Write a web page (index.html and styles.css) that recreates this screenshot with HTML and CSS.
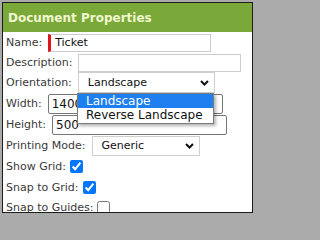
FILE: index.html
```html
<!DOCTYPE html>
<html>
<head>
<meta charset="utf-8">
<link rel="stylesheet" href="styles.css">
</head>
<body>
<div class="panel">
  <div class="header">Document Properties</div>
  <div class="row r-name">
    <span class="label">Name:</span>
    <input class="field field-name" type="text" value="Ticket">
  </div>
  <div class="row r-desc">
    <span class="label">Description:</span>
    <input class="field field-desc" type="text" value="">
  </div>
  <div class="row r-orient">
    <span class="label">Orientation:</span>
    <div class="select select-orient">
      <span class="select-text">Landscape</span>
      <svg class="chev" width="9" height="6" viewBox="0 0 9 6"><polyline points="1,1 4.5,4.5 8,1" fill="none" stroke="#111" stroke-width="2"/></svg>
    </div>
  </div>
  <div class="row r-num">
    <span class="label">Width:</span>
    <input class="num" type="text" value="1400">
  </div>
  <div class="row r-num">
    <span class="label">Height:</span>
    <input class="num" type="text" value="500">
  </div>
  <div class="row r-print">
    <span class="label">Printing Mode:</span>
    <div class="select select-print">
      <span class="select-text">Generic</span>
      <svg class="chev" width="9" height="6" viewBox="0 0 9 6"><polyline points="1,1 4.5,4.5 8,1" fill="none" stroke="#111" stroke-width="2"/></svg>
    </div>
  </div>
  <div class="row r-check">
    <span class="label">Show Grid:</span>
    <input class="check" type="checkbox" checked>
  </div>
  <div class="row r-check">
    <span class="label">Snap to Grid:</span>
    <input class="check" type="checkbox" checked>
  </div>
  <div class="row r-check r-last">
    <span class="label">Snap to Guides:</span>
    <input class="check" type="checkbox">
  </div>
  <div class="dropdown">
    <div class="opt opt-active">Landscape</div>
    <div class="opt">Reverse Landscape</div>
  </div>
</div>
</body>
</html>
```
FILE: styles.css
```css
html, body {
  margin: 0;
  padding: 0;
  background: #ababab;
  width: 256px;
  height: 216px;
  overflow: hidden;
}
body {
  font-family: "DejaVu Sans", Verdana, sans-serif;
  font-size: 11px;
}
.panel {
  position: relative;
  box-sizing: border-box;
  margin: 2px 3px 0 2px;
  width: 251px;
  height: 211px;
  border: 1px solid #1c1c1c;
  background: #fff;
  overflow: hidden;
  display: flex;
  flex-direction: column;
}
.header {
  flex: none;
  height: 29px;
  background: #7aa93a;
  color: #f1f7cf;
  font-weight: bold;
  font-size: 12px;
  display: flex;
  align-items: center;
  padding-left: 5px;
}
.row {
  flex: none;
  display: flex;
  align-items: center;
  padding-left: 3px;
  gap: 6px;
  height: 21px;
  color: #3a3a3a;
}
.r-desc { height: 19px; }
.r-check { gap: 4px; }
.r-last { height: 18px; }
.label { white-space: nowrap; }
.field {
  box-sizing: border-box;
  height: 18px;
  width: 163px;
  margin: 0;
  padding: 0 3px;
  border: 1px solid #cdcdcd;
  font: 11px "DejaVu Sans", Verdana, sans-serif;
  color: #111;
  outline: none;
}
.field-name {
  border-left: 3px solid #e0141e;
  padding-left: 4px;
}
.num {
  box-sizing: border-box;
  height: 20px;
  width: 175px;
  margin: 0;
  padding: 0 3px;
  border: 1px solid #767676;
  border-radius: 2px;
  font: 12px "DejaVu Sans", Verdana, sans-serif;
  color: #111;
  outline: none;
}
.select {
  box-sizing: border-box;
  display: flex;
  align-items: center;
  justify-content: space-between;
  border: 1px solid #cfcfcf;
  padding: 0 5px 0 9px;
  color: #111;
  background: #fff;
}
.select-orient { width: 137px; height: 21px; }
.select-print { width: 108px; height: 20px; }
.chev { display: block; }
.check {
  width: 13px;
  height: 13px;
  margin: 0;
}
.dropdown {
  position: absolute;
  left: 74px;
  top: 90px;
  width: 137px;
  box-sizing: border-box;
  border: 1px solid #7a7a7a;
  background: #fff;
  box-shadow: 2px 2px 3px rgba(0, 0, 0, 0.3);
  padding-bottom: 1px;
}
.opt {
  height: 14px;
  line-height: 14px;
  padding-left: 8px;
  color: #111;
  font-size: 12px;
  white-space: nowrap;
}
.opt-active {
  background: #1e80f0;
  color: #fff;
}
```
